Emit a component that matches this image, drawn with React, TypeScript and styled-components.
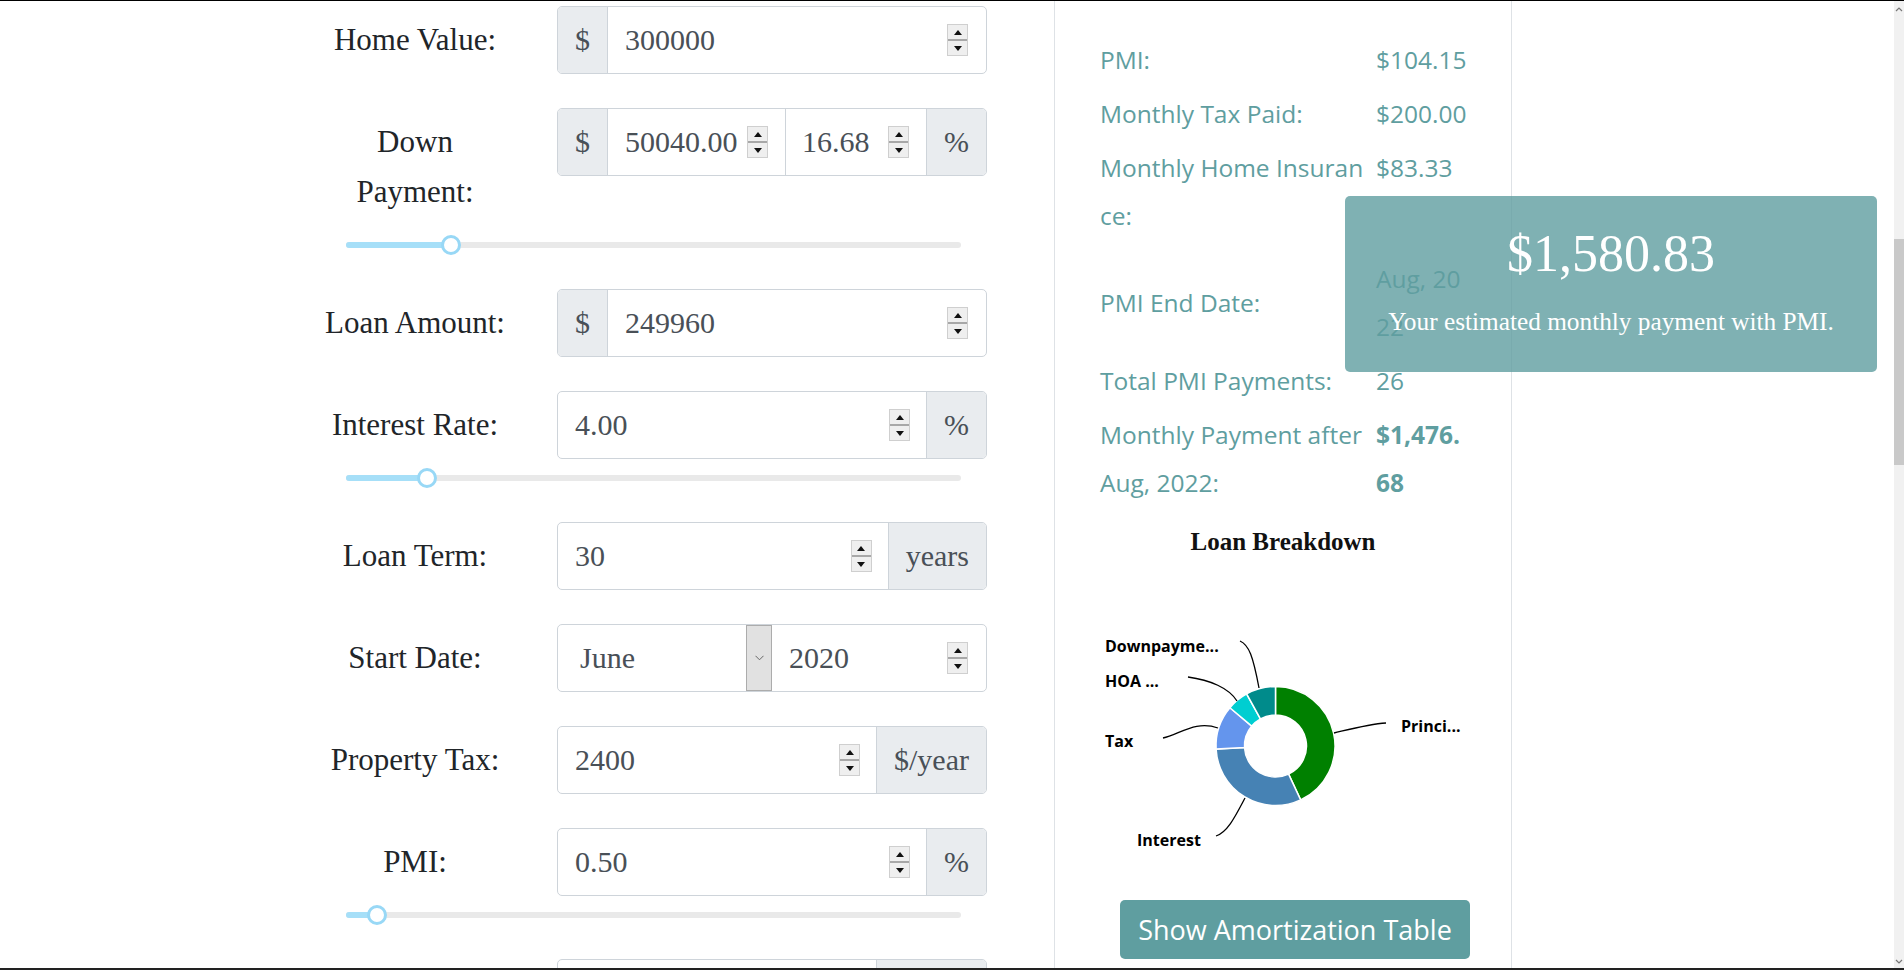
import React from "react";
import styled, { createGlobalStyle } from "styled-components";

const GlobalStyle = createGlobalStyle`
  html, body { margin: 0; padding: 0; background: #fff; overflow: hidden; }
  * { box-sizing: border-box; }
`;

const Frame = styled.div`
  width: 1904px;
  height: 970px;
  border-top: 1px solid #000;
  border-bottom: 2px solid #222;
  display: flex;
  overflow: hidden;
`;

const Page = styled.div`
  flex: 1;
  position: relative;
  display: grid;
  grid-template-columns: 1054px 458px 1fr;
  align-items: start;
`;

const FormArea = styled.div`
  padding: 5px 0 0 322px;
  width: 1054px;
`;

const FormGroup = styled.div`
  width: 665px;
  margin-bottom: 34px;
`;

const FormRow = styled.div`
  display: grid;
  grid-template-columns: 186px 430px;
  column-gap: 49px;
  align-items: start;
`;

const Label = styled.label`
  display: block;
  text-align: center;
  padding: 9px 0;
  line-height: 50px;
  font-family: "Liberation Serif", "Times New Roman", serif;
  font-size: 31px;
  color: #212529;
`;

const InputGroup = styled.div`
  display: flex;
  height: 68px;
  border: 1px solid #ced4da;
  border-radius: 5px;
  overflow: hidden;
  font-family: "Liberation Serif", "Times New Roman", serif;
  font-size: 30px;
  color: #495057;
  background: #fff;
`;

const Addon = styled.span<{ $side?: "left" | "right" }>`
  flex: none;
  display: flex;
  align-items: center;
  padding: 0 17px;
  background: #e9ecef;
  ${(p) => (p.$side === "right" ? "border-left: 1px solid #ced4da;" : "border-right: 1px solid #ced4da;")}
`;

const Field = styled.div<{ $w?: number; $pl?: number; $pr?: number; $divider?: boolean }>`
  flex: ${(p) => (p.$w ? `0 0 ${p.$w}px` : "1 1 0")};
  min-width: 0;
  display: flex;
  align-items: center;
  justify-content: space-between;
  padding: 0 ${(p) => p.$pr ?? 18}px 0 ${(p) => p.$pl ?? 17}px;
  ${(p) => (p.$divider ? "border-left: 1px solid #ced4da;" : "")}
`;

const Spinner = styled.span`
  flex: none;
  display: flex;
  flex-direction: column;
  width: 21px;
  height: 32px;
  border: 1px solid #cfcfcf;
  background: #efefef;
`;

const SpinHalf = styled.span<{ $down?: boolean }>`
  flex: 1;
  display: flex;
  align-items: center;
  justify-content: center;
  ${(p) => (p.$down ? "border-top: 2px solid #a8a8a8;" : "")}
`;

const Tri = styled.span<{ $down?: boolean }>`
  width: 0;
  height: 0;
  border-left: 4.5px solid transparent;
  border-right: 4.5px solid transparent;
  ${(p) => (p.$down ? "border-top: 5px solid #111;" : "border-bottom: 5px solid #111;")}
`;

const SelectField = styled.div`
  flex: 0 0 188px;
  display: flex;
  align-items: center;
  padding-left: 22px;
`;

const SelectArrow = styled.span`
  flex: 0 0 26px;
  display: flex;
  align-items: center;
  justify-content: center;
  background: #e1e1e1;
  border: 1px solid #acacac;
`;

const SliderWrap = styled.div`
  position: relative;
  height: 29px;
  padding-top: 16px;
  margin: 0 26px 0 24px;
`;

const Track = styled.div`
  position: relative;
  height: 6px;
  border-radius: 3px;
  background: #e9e9e9;
`;

const Fill = styled.div`
  height: 100%;
  border-radius: 3px;
  background: #a6dff8;
`;

const Thumb = styled.span`
  position: absolute;
  top: -7px;
  width: 20px;
  height: 20px;
  margin-left: -10px;
  border-radius: 50%;
  border: 3px solid #98d8f6;
  background: #fff;
`;

const Panel = styled.div`
  border-left: 1px solid #dee2e6;
  border-right: 1px solid #dee2e6;
  height: 967px;
  padding-top: 32px;
  display: flex;
  flex-direction: column;
`;

const Summary = styled.div`
  display: grid;
  grid-template-columns: 268px 94px;
  column-gap: 8px;
  margin-left: 45px;
  font-family: "Open Sans", "Noto Sans", sans-serif;
  font-size: 24.5px;
  line-height: 48px;
  color: #5f9ea0;
`;

const Cell = styled.div<{ $value?: boolean; $bold?: boolean; $gap?: number }>`
  padding: 3px 0;
  word-break: break-all;
  align-self: ${(p) => (p.$value ? "start" : "center")};
  margin-top: ${(p) => p.$gap ?? 0}px;
  font-weight: ${(p) => (p.$bold ? 700 : 400)};
`;

const ChartTitle = styled.div`
  margin-top: 17px;
  text-align: center;
  font-family: "Liberation Serif", "Times New Roman", serif;
  font-weight: 700;
  font-size: 25px;
  line-height: 30px;
  color: #111;
`;

const ChartSvg = styled.svg`
  display: block;
  width: 456px;
  height: 343px;
`;

const ChartLabel = styled.text`
  font-family: "Open Sans", "Noto Sans", sans-serif;
  font-weight: 700;
  font-size: 16px;
  fill: #000;
`;

const AmortButton = styled.button`
  margin-left: 65px;
  width: 350px;
  height: 59px;
  border: none;
  border-radius: 5px;
  background: #5f9ea0;
  color: #fff;
  font-family: "Open Sans", "Noto Sans", sans-serif;
  font-size: 27px;
  padding: 0;
  cursor: pointer;
`;

const PaymentBubble = styled.div`
  position: absolute;
  left: 1345px;
  top: 195px;
  width: 532px;
  height: 176px;
  border-radius: 5px;
  background: rgba(95, 158, 160, 0.8);
  color: #fff;
  text-align: center;
  padding-top: 28px;
  font-family: "Liberation Serif", "Times New Roman", serif;
`;

const BubbleAmount = styled.div`
  font-size: 52px;
  line-height: 60px;
`;

const BubbleText = styled.div`
  margin-top: 22px;
  font-size: 25.3px;
  line-height: 30px;
`;

const ScrollBar = styled.div`
  position: relative;
  flex: 0 0 10px;
  background: #f1f1f1;
`;

const ScrollThumb = styled.div`
  position: absolute;
  left: 0;
  right: 0;
  top: 238px;
  height: 226px;
  background: #c9c9c9;
`;

const ScrollArrow = styled.svg<{ $bottom?: boolean }>`
  position: absolute;
  left: 1px;
  ${(p) => (p.$bottom ? "bottom: 4px;" : "top: 6px;")}
`;

function Spin() {
  return (
    <Spinner>
      <SpinHalf>
        <Tri />
      </SpinHalf>
      <SpinHalf $down>
        <Tri $down />
      </SpinHalf>
    </Spinner>
  );
}

function Slider({ pct }: { pct: number }) {
  return (
    <SliderWrap>
      <Track>
        <Fill style={{ width: `${pct}%` }} />
        <Thumb style={{ left: `${pct}%` }} />
      </Track>
    </SliderWrap>
  );
}

const cx = 1275.5;
const cy = 746;
const R = 59.5;
const r = 31;

function arcPath(a0: number, a1: number) {
  const rad = (d: number) => ((d - 90) * Math.PI) / 180;
  const p = (rr: number, d: number) => [cx + rr * Math.cos(rad(d)), cy + rr * Math.sin(rad(d))];
  const large = a1 - a0 > 180 ? 1 : 0;
  const [x0, y0] = p(R, a0);
  const [x1, y1] = p(R, a1);
  const [x2, y2] = p(r, a1);
  const [x3, y3] = p(r, a0);
  return `M${x0},${y0} A${R},${R} 0 ${large} 1 ${x1},${y1} L${x2},${y2} A${r},${r} 0 ${large} 0 ${x3},${y3} Z`;
}

const slices = [
  { a0: 0, a1: 155, color: "#008000" },
  { a0: 155, a1: 267, color: "#4682b4" },
  { a0: 267, a1: 310, color: "#6495ed" },
  { a0: 310, a1: 331, color: "#00ced1" },
  { a0: 331, a1: 360, color: "#008b8b" },
];

function LoanChart() {
  return (
    <ChartSvg viewBox="1055 557 456 343">
      {slices.map((s, i) => (
        <path key={i} d={arcPath(s.a0, s.a1)} fill={s.color} stroke="#fff" strokeWidth={1.5} />
      ))}
      <g fill="none" stroke="#000" strokeWidth={1.3}>
        <path d="M1240,641 C1249,645 1253,656 1259,688" />
        <path d="M1188,677 C1210,680 1229,688 1237,701" />
        <path d="M1163,738 C1180,734 1196,720 1218,728" />
        <path d="M1216,836 C1228,832 1236,815 1245,798" />
        <path d="M1334,733 C1355,728 1370,724 1386,723" />
      </g>
      <ChartLabel x={1105} y={652}>Downpayme...</ChartLabel>
      <ChartLabel x={1105} y={687}>HOA ...</ChartLabel>
      <ChartLabel x={1105} y={747}>Tax</ChartLabel>
      <ChartLabel x={1137} y={846}>Interest</ChartLabel>
      <ChartLabel x={1401} y={732}>Princi...</ChartLabel>
    </ChartSvg>
  );
}

export default function App() {
  return (
    <>
      <GlobalStyle />
      <Frame>
        <Page>
          <FormArea>
            <FormGroup>
              <FormRow>
                <Label>Home Value:</Label>
                <InputGroup>
                  <Addon>$</Addon>
                  <Field>
                    <span>300000</span>
                    <Spin />
                  </Field>
                </InputGroup>
              </FormRow>
            </FormGroup>

            <FormGroup>
              <FormRow>
                <Label>Down Payment:</Label>
                <InputGroup>
                  <Addon>$</Addon>
                  <Field $w={177} $pr={17}>
                    <span>50040.00</span>
                    <Spin />
                  </Field>
                  <Field $divider $pl={16} $pr={17}>
                    <span>16.68</span>
                    <Spin />
                  </Field>
                  <Addon $side="right">%</Addon>
                </InputGroup>
              </FormRow>
              <Slider pct={17.07} />
            </FormGroup>

            <FormGroup>
              <FormRow>
                <Label>Loan Amount:</Label>
                <InputGroup>
                  <Addon>$</Addon>
                  <Field>
                    <span>249960</span>
                    <Spin />
                  </Field>
                </InputGroup>
              </FormRow>
            </FormGroup>

            <FormGroup>
              <FormRow>
                <Label>Interest Rate:</Label>
                <InputGroup>
                  <Field $pr={16}>
                    <span>4.00</span>
                    <Spin />
                  </Field>
                  <Addon $side="right">%</Addon>
                </InputGroup>
              </FormRow>
              <Slider pct={13.2} />
            </FormGroup>

            <FormGroup>
              <FormRow>
                <Label>Loan Term:</Label>
                <InputGroup>
                  <Field $pr={16}>
                    <span>30</span>
                    <Spin />
                  </Field>
                  <Addon $side="right">years</Addon>
                </InputGroup>
              </FormRow>
            </FormGroup>

            <FormGroup>
              <FormRow>
                <Label>Start Date:</Label>
                <InputGroup>
                  <SelectField>June</SelectField>
                  <SelectArrow>
                    <svg width="9" height="6" viewBox="0 0 9 6">
                      <polyline points="0.5,0.8 4.5,4.8 8.5,0.8" fill="none" stroke="#666" strokeWidth="1" />
                    </svg>
                  </SelectArrow>
                  <Field>
                    <span>2020</span>
                    <Spin />
                  </Field>
                </InputGroup>
              </FormRow>
            </FormGroup>

            <FormGroup>
              <FormRow>
                <Label>Property Tax:</Label>
                <InputGroup>
                  <Field $pr={16}>
                    <span>2400</span>
                    <Spin />
                  </Field>
                  <Addon $side="right">$/year</Addon>
                </InputGroup>
              </FormRow>
            </FormGroup>

            <FormGroup>
              <FormRow>
                <Label>PMI:</Label>
                <InputGroup>
                  <Field $pr={16}>
                    <span>0.50</span>
                    <Spin />
                  </Field>
                  <Addon $side="right">%</Addon>
                </InputGroup>
              </FormRow>
              <Slider pct={5} />
            </FormGroup>

            <FormGroup>
              <FormRow>
                <Label>Home Insurance:</Label>
                <InputGroup>
                  <Field $pr={16}>
                    <span>1000</span>
                    <Spin />
                  </Field>
                  <Addon $side="right">$/year</Addon>
                </InputGroup>
              </FormRow>
            </FormGroup>
          </FormArea>

          <Panel>
            <Summary>
              <Cell>PMI:</Cell>
              <Cell $value>$104.15</Cell>
              <Cell>Monthly Tax Paid:</Cell>
              <Cell $value>$200.00</Cell>
              <Cell>Monthly Home Insurance:</Cell>
              <Cell $value>$83.33</Cell>
              <Cell $gap={9}>PMI End Date:</Cell>
              <Cell $value $gap={9}>Aug, 2022</Cell>
              <Cell>Total PMI Payments:</Cell>
              <Cell $value>26</Cell>
              <Cell>Monthly Payment after Aug, 2022:</Cell>
              <Cell $value $bold>$1,476.68</Cell>
            </Summary>
            <ChartTitle>Loan Breakdown</ChartTitle>
            <LoanChart />
            <AmortButton type="button">Show Amortization Table</AmortButton>
          </Panel>

          <div />

          <PaymentBubble>
            <BubbleAmount>$1,580.83</BubbleAmount>
            <BubbleText>Your estimated monthly payment with PMI.</BubbleText>
          </PaymentBubble>
        </Page>
        <ScrollBar>
          <ScrollArrow width="8" height="5" viewBox="0 0 8 5">
            <polyline points="1,4 4,1 7,4" fill="none" stroke="#777" strokeWidth="1.2" />
          </ScrollArrow>
          <ScrollThumb />
          <ScrollArrow $bottom width="8" height="5" viewBox="0 0 8 5">
            <polyline points="1,1 4,4 7,1" fill="none" stroke="#777" strokeWidth="1.2" />
          </ScrollArrow>
        </ScrollBar>
      </Frame>
    </>
  );
}
